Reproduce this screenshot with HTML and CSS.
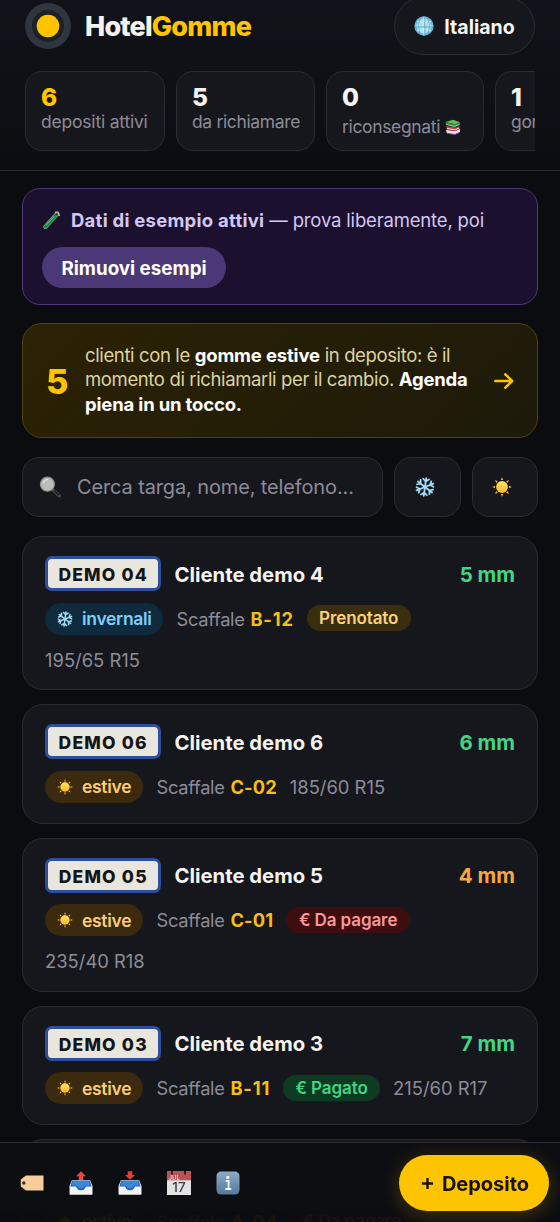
FILE: index.html
```html
<!DOCTYPE html>
<html lang="it">
<head>
<meta charset="utf-8">
<title>HotelGomme</title>
<link rel="stylesheet" href="styles.css">
</head>
<body>
<svg class="sprite" aria-hidden="true">
  <defs>
    <linearGradient id="sunfill" x1="0" y1="0" x2="0" y2="1"><stop offset="0" stop-color="#ffe45c"/><stop offset="1" stop-color="#ffb52e"/></linearGradient>
    <linearGradient id="infofill" x1="0" y1="0" x2="0" y2="1"><stop offset="0" stop-color="#8cabc7"/><stop offset="1" stop-color="#55799e"/></linearGradient>
  </defs>
  <symbol id="globe" viewBox="0 0 20 20">
    <circle cx="10" cy="10" r="9.7" fill="#5db4d4"/>
    <circle cx="10" cy="10" r="7.5" fill="#a9dcec"/>
    <g fill="none" stroke="#e0f4f9" stroke-width=".9"><ellipse cx="10" cy="10" rx="4.6" ry="9"/><path d="M10 1v18M1 10h18M3 5.200q7 2.400 14 0M3 14.800q7-2.400 14 0"/></g>
    <g fill="none" stroke="#4a9fc4" stroke-width=".8"><ellipse cx="10" cy="10" rx="5.300" ry="9.300"/><path d="M10.800 1v18M1 10.800h18"/></g>
  </symbol>
  <symbol id="books" viewBox="0 0 16 16">
    <path d="M1 11l9 1 5-2v3l-5 2.5-8-1z" fill="#e8e4ec"/><path d="M2 13.8l8 1.2 4.5-2v1l-4.5 2-8-1.2z" fill="#7b3b9c"/>
    <path d="M1.5 7l9 1.5L14.500 7v3l-4.500 2-8.500-1.200z" fill="#d8353f"/><path d="M2 9.500l8 1.200 4.300-1.700" stroke="#f5dfe0" stroke-width="1" fill="none"/>
    <path d="M.5 3L8 .8l7 2.400-5 2.300z" fill="#61bd4f"/><path d="M.5 3L10 5.500l5-2.300v2.600l-5 2.600L1 6z" fill="#298846"/><path d="M1.200 5.300l8.500 2 4.800-2.100" stroke="#e2eddb" stroke-width=".6" fill="none"/>
  </symbol>
  <symbol id="tube" viewBox="0 0 20 20">
    <path d="M15.500 3.500L3.300 17" stroke="#9ba49e" stroke-width="4.200" stroke-linecap="round"/><path d="M14 5.200L3.500 16.800" stroke="#0b8a36" stroke-width="3.200" stroke-linecap="round"/><path d="M12.500 6L4 15.300" stroke="#62d575" stroke-width="1"/><path d="M13.300 1.800l4.500 4" stroke="#c9cec9" stroke-width="1.400"/><path d="M15.500 3.500L14.300 4.900" stroke="#26362d" stroke-width="2.200"/>
  </symbol>
  <symbol id="search" viewBox="0 0 22 22">
    <path d="M13.500 13.500l6.800 6.300" stroke="#4b4b4e" stroke-width="3.200" stroke-linecap="round"/><path d="M15 14.500l5 4.800" stroke="#18181b" stroke-width="1.500"/><circle cx="8.400" cy="8.200" r="7" fill="#b9bbbd" stroke="#8b8d8f" stroke-width="1.200"/><path d="M4 7q1.500-3.500 5-3.500" stroke="#dedfdf" stroke-width="1.300" fill="none"/>
  </symbol>
  <symbol id="snow" viewBox="-11 -11 22 22">
    <g fill="none" stroke-width="2" stroke-linecap="round" stroke-linejoin="round" transform="rotate(8)">
      <path id="arm" d="M0 0V-9.900M-3.200-8.700L0-6 3.200-8.700"/>
      <use href="#arm" transform="rotate(60)"/><use href="#arm" transform="rotate(120)"/><use href="#arm" transform="rotate(180)"/><use href="#arm" transform="rotate(240)"/><use href="#arm" transform="rotate(300)"/>
    </g>
  </symbol>
  <symbol id="sun" viewBox="-10 -10 20 20">
    <circle r="5.900" fill="url(#sunfill)"/>
    <g fill="#f5a928"><path id="ray" d="M-1.200-7L0-9.900 1.200-7z"/><use href="#ray" transform="rotate(45)"/><use href="#ray" transform="rotate(90)"/><use href="#ray" transform="rotate(135)"/><use href="#ray" transform="rotate(180)"/><use href="#ray" transform="rotate(225)"/><use href="#ray" transform="rotate(270)"/><use href="#ray" transform="rotate(315)"/></g>
  </symbol>
  <symbol id="tray" viewBox="0 0 24 24">
    <path d="M3 9h18l2.500 6v8.500h-23V15z" fill="#e9edf0"/><path d="M3.200 9.500h17.600l2 6.500h-6q-1.300 3.600-4.800 3.600T7.200 16h-6z" fill="#1d65b5"/><path d="M4 10h16l1.500 4.500h-5q-2 3-4.500 3t-4.500-3h-5z" fill="#3c87d4"/><path d="M1 15.500h5.800q1.400 4 5.200 4t5.200-4H23v8H1z" fill="#f2f3f3"/>
  </symbol>
</svg>

<header class="top">
  <div class="top-row">
    <div class="logo"><svg viewBox="0 0 46 46"><circle cx="23" cy="23" r="23" fill="#303640"/><circle cx="23" cy="23" r="16" fill="#1d2027"/><circle cx="23" cy="23" r="11.300" fill="#ffc400"/></svg></div>
    <h1 class="brand">Hotel<span>Gomme</span></h1>
    <button class="lang"><svg class="i20"><use href="#globe"/></svg><span>Italiano</span></button>
  </div>
  <div class="stats">
    <div class="stat s1"><b class="gold">6</b><span>depositi attivi</span></div>
    <div class="stat s2"><b>5</b><span>da richiamare</span></div>
    <div class="stat s3"><b>0</b><span class="low">riconsegnati <svg class="i16"><use href="#books"/></svg></span></div>
    <div class="stat s4"><b>1</b><span>gomme</span></div>
  </div>
</header>

<main class="main">
  <section class="demo">
    <p><svg class="i20"><use href="#tube"/></svg><span><b>Dati di esempio attivi</b> — prova liberamente, poi</span></p>
    <button class="remove">Rimuovi esempi</button>
  </section>
  <section class="alert">
    <div class="count">5</div>
    <p>clienti con le <b>gomme estive</b> in deposito: è il<br>momento di richiamarli per il cambio. <b>Agenda<br>piena in un tocco.</b></p>
    <svg class="arrow" viewBox="0 0 20 16"><path d="M1.300 8h16.500M11.300 1.300L18.200 8l-6.900 6.700"/></svg>
  </section>
  <div class="filters">
    <div class="search"><svg class="i22"><use href="#search"/></svg><span>Cerca targa, nome, telefono...</span></div>
    <button class="filter"><svg class="i20 snow"><use href="#snow"/></svg></button>
    <button class="filter"><svg class="i20"><use href="#sun"/></svg></button>
  </div>

  <article class="card tall">
    <div class="head"><span class="plate">DEMO 04</span><h2>Cliente demo 4</h2><span class="mm ok">5 mm</span></div>
    <div class="meta"><span class="season winter"><svg class="i16 snow"><use href="#snow"/></svg>invernali</span><span class="shelf">Scaffale <b class="wide">B-12</b></span><span class="tag booked">Prenotato</span></div>
    <div class="size-row">195/65 R15</div>
  </article>
  <article class="card">
    <div class="head"><span class="plate">DEMO 06</span><h2>Cliente demo 6</h2><span class="mm ok">6 mm</span></div>
    <div class="meta"><span class="season summer"><svg class="i16"><use href="#sun"/></svg>estive</span><span class="shelf">Scaffale <b>C-02</b></span><span class="size">185/60 R15</span></div>
  </article>
  <article class="card tall">
    <div class="head"><span class="plate">DEMO 05</span><h2>Cliente demo 5</h2><span class="mm warn">4 mm</span></div>
    <div class="meta"><span class="season summer"><svg class="i16"><use href="#sun"/></svg>estive</span><span class="shelf">Scaffale <b>C-01</b></span><span class="tag due">€ Da pagare</span></div>
    <div class="size-row">235/40 R18</div>
  </article>
  <article class="card">
    <div class="head"><span class="plate">DEMO 03</span><h2>Cliente demo 3</h2><span class="mm ok">7 mm</span></div>
    <div class="meta"><span class="season summer"><svg class="i16"><use href="#sun"/></svg>estive</span><span class="shelf">Scaffale <b class="wide">B-11</b></span><span class="tag paid">€ Pagato</span><span class="size">215/60 R17</span></div>
  </article>
  <article class="card tall">
    <div class="head"></div>
    <div class="meta"><span class="season summer"><svg class="i16"><use href="#sun"/></svg>estive</span><span class="shelf">Scaffale <b>A-04</b></span><span class="tag due">€ Da pagare</span></div>
  </article>
</main>

<nav class="bar">
  <div class="tools">
    <svg viewBox="0 0 24 24"><path d="M6 4.500h17.500v15H6L.8 15.500v-7z" fill="#f6cd9b"/><circle cx="3.800" cy="12" r="1.700" fill="#3a2c26"/></svg>
    <svg viewBox="0 0 24 24"><use href="#tray"/><path d="M12 .3l5 4.900h-2.800V9H9.800V5.200H7z" fill="#ee453f"/></svg>
    <svg viewBox="0 0 24 24"><use href="#tray"/><path d="M12 8.800L7 4h2.700V.3h4.600V4H17z" fill="#e83c39"/></svg>
    <svg viewBox="0 0 24 24"><path d="M0 .5h24V24H0z" fill="#e2e2e2"/><path d="M0 .5h24v8.800H0z" fill="#b95358"/><path d="M5 0v3.500M18 0v3.500" stroke="#3c1b21" stroke-width="2"/><text x="1.500" y="8.500" class="month">JUL</text><text x="12" y="21.200" text-anchor="middle" class="day">17</text></svg>
    <svg viewBox="0 0 24 24"><rect x=".5" y=".5" width="23" height="23" rx="4.500" fill="url(#infofill)"/><circle cx="11.800" cy="6.300" r="1.600" fill="#f4f7fa"/><path d="M9.800 10h2.800v7.500M9.300 18h6" fill="none" stroke="#f4f7fa" stroke-width="1.800"/></svg>
  </div>
  <button class="add"><svg viewBox="0 0 14 14"><path d="M7 1v12M1 7h12"/></svg><span>Deposito</span></button>
</nav>
</body>
</html>
```
FILE: styles.css
```css
* { box-sizing: border-box; }
body { margin: 0; height: 1222px; overflow: hidden; background: #0b0c10; color: #f4f3ef; font-family: Inter, "Noto Sans", sans-serif; font-size: 18px; }
h1, h2, p { margin: 0; }
button { border: 0; font: inherit; color: inherit; padding: 0; }
svg { display: block; flex: none; }
.sprite { position: absolute; width: 0; height: 0; }
.i16 { width: 16px; height: 16px; }
.i20 { width: 20px; height: 20px; }
.i22 { width: 22px; height: 22px; }
.snow { stroke: #a5ddf9; }

.top { height: 171px; padding: 0 25px; overflow: hidden; background: linear-gradient(#12131a, #0c0d11); border-bottom: 1px solid #2c2d33; }
.top-row { display: flex; align-items: center; height: 71px; padding-bottom: 19px; }
.logo svg { width: 46px; height: 46px; }
.brand { margin: 2px 0 0 14px; font-size: 27px; font-weight: 800; letter-spacing: -.8px; line-height: 32px; }
.brand span, .gold { color: #ffc400; }
.lang { display: flex; align-items: center; justify-content: center; gap: 10px; flex: none; width: 141px; height: 58px; margin: -3px 0 -3px auto; border: 1px solid #2b2c33; border-radius: 29px; background: #16171c; font-size: 19.500px; font-weight: 700; }
.lang span { padding-top: 1px; }
.stats { display: flex; gap: 11px; overflow: hidden; }
.stat { flex: none; height: 80px; padding: 11px 15px; border: 1px solid #2b2c33; border-radius: 17px; background: #16171c; white-space: nowrap; }
.s1 { width: 140px; }
.s2 { width: 139px; }
.s3 { width: 158px; }
.s4 { width: 120px; }
.stat b { display: block; font-size: 24.500px; font-weight: 800; line-height: 29px; }
.stat span { display: flex; align-items: center; gap: 5px; color: #8c8c99; font-size: 17.500px; letter-spacing: -.35px; line-height: 19px; }
.s1 span { letter-spacing: -.2px; }
.stat .low { padding-top: 5px; }

.main { padding: 17px 22px 0; }
.demo { height: 117px; padding: 19px 19px; border: 1px solid #4c397b; border-radius: 18px; background: #1b112e; color: #d4c7f2; }
.demo p { display: flex; gap: 9px; align-items: center; line-height: 24px; font-size: 18.500px; letter-spacing: -.17px; white-space: nowrap; }
.demo p b { letter-spacing: .25px; }
.remove { display: block; width: 184px; height: 41px; margin-top: 15px; padding-top: 1px; border-radius: 21px; background: #4a3877; color: #fff; font-weight: 700; font-size: 18.800px; }
.alert { display: flex; align-items: center; height: 115px; margin-top: 18px; padding: 0 23px; border: 1px solid #51430c; border-radius: 20px; background: linear-gradient(135deg, #2c2203, #1d1a0a); color: #ddd3a2; }
.count { width: 39px; padding-top: 2px; color: #ffc400; font-size: 34.500px; font-weight: 800; }
.alert p { flex: 1; padding-bottom: 2px; line-height: 24.500px; font-size: 18.500px; letter-spacing: -.37px; white-space: nowrap; }
.alert b { color: #fff; letter-spacing: -.17px; }
.arrow { width: 20px; height: 16px; fill: none; stroke: #ffc400; stroke-width: 2.500; stroke-linecap: round; stroke-linejoin: round; }
.filters { display: flex; gap: 11px; margin-top: 19px; }
.search, .filter { height: 60px; border: 1px solid #2b2c33; border-radius: 17px; background: #16171c; }
.search { display: flex; align-items: center; gap: 16px; flex: 1; padding-left: 16px; color: #8c8c99; font-size: 20px; letter-spacing: -.13px; white-space: nowrap; }
.filter { display: flex; align-items: center; justify-content: center; width: 66.500px; padding-right: 5px; }

.card { margin-top: 14px; height: 119.400px; padding: 19px 22px; border: 1px solid #2b2c33; border-radius: 21px; background: #16171c; white-space: nowrap; }
.tall { height: 154.300px; }
.filters + .card { margin-top: 19px; }
.head { display: flex; align-items: center; height: 35px; }
.plate { width: 115.500px; height: 35px; padding-left: 1px; border: 3px solid #2e4f9e; border-radius: 7px; background: #e9e7dd; color: #15161a; font-size: 17.500px; font-weight: 800; letter-spacing: 1.200px; line-height: 31px; text-align: center; }
.head h2 { margin-left: 14px; padding-top: 1px; font-size: 20.300px; font-weight: 700; }
.mm { margin-left: auto; padding-top: 1px; font-size: 20.500px; font-weight: 700; }
.ok { color: #43d583; }
.warn { color: #f6a645; }
.meta { display: flex; align-items: center; height: 32px; margin-top: 11.500px; }
.season { display: flex; align-items: center; gap: 9px; height: 32px; padding: 0 12px; border-radius: 16px; font-size: 17.500px; font-weight: 600; letter-spacing: -.3px; }
.winter { width: 118px; background: #0e2a3c; color: #7dcff9; }
.summer { width: 98px; background: #3b2a0e; color: #fbcd77; }
.shelf { margin-left: 13.500px; color: #8c8c99; font-size: 18.300px; letter-spacing: -.3px; }
.shelf b { margin-left: 1px; color: #f5be16; letter-spacing: .1px; }
.shelf .wide { letter-spacing: .8px; }
.tag { height: 26px; margin: -1px 0 0 13px; border-radius: 13px; font-size: 17px; font-weight: 600; letter-spacing: -.1px; line-height: 26px; text-align: center; }
.booked { width: 104px; background: #3a2e0e; color: #fbd27b; }
.due { width: 124px; background: #3e0d10; color: #f79a9a; }
.paid { width: 97px; background: #0d3b22; color: #43d583; }
.size, .size-row { color: #8c8c99; font-size: 18.400px; }
.size { margin-left: 13px; }
.size-row { margin-top: 15px; height: 21px; line-height: 21px; }

.bar { position: fixed; left: 0; right: 0; bottom: 0; height: 80px; display: flex; align-items: center; justify-content: space-between; padding: 1px 11px 0 20px; border-top: 1px solid #2c2d33; background: linear-gradient(#0d0e12 80%, rgba(11, 12, 16, .94)); }
.tools { display: flex; gap: 25px; }
.tools svg { width: 24px; height: 24px; }
.month { font-family: Inter, sans-serif; font-size: 6px; font-weight: 600; fill: #edc9cb; }
.day { font-family: Inter, sans-serif; font-size: 13.500px; font-weight: 500; fill: #3c3d40; }
.add { display: flex; align-items: center; justify-content: center; gap: 8px; width: 150px; height: 56px; padding: 1px 0 0 2px; border-radius: 28px; background: #ffc400; color: #161304; font-size: 20px; font-weight: 700; box-shadow: 0 4px 20px rgba(255, 196, 0, .22); }
.add svg { width: 13px; height: 13px; fill: none; stroke: #161304; stroke-width: 2.500; }
```
